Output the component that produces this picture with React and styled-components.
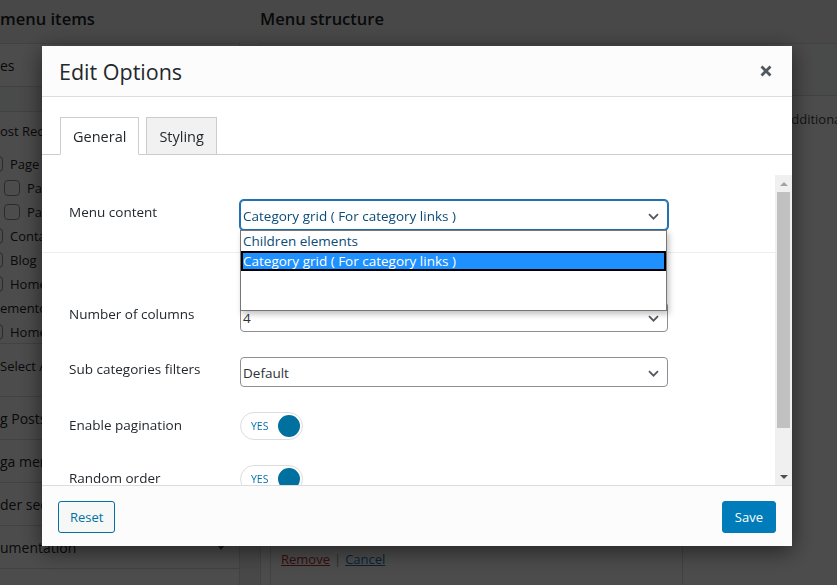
import React from "react";
import styled, { createGlobalStyle } from "styled-components";

const GlobalStyle = createGlobalStyle`
  html, body { margin: 0; padding: 0; overflow: hidden; }
  body {
    font-family: "Open Sans", "Liberation Sans", sans-serif;
    background: #f0f0f1;
    color: #1d2327;
  }
  * { box-sizing: border-box; }
`;

/* ---------- background admin page ---------- */

const Page = styled.div`
  width: 837px;
  height: 585px;
  overflow: hidden;
  display: flex;
  flex-direction: column;
`;

const Headings = styled.div`
  height: 43px;
  flex: none;
  display: flex;
  align-items: center;
  padding-bottom: 7px;
`;

const Heading = styled.h2`
  margin: 0;
  width: ${(p) => p.$width || "auto"};
  font-size: 16.5px;
  font-weight: 600;
  color: #1d2327;
  white-space: nowrap;
`;

const Columns = styled.div`
  flex: 1;
  min-height: 0;
  display: flex;
  gap: 20px;
`;

const SideColumn = styled.div`
  width: 240px;
  flex: none;
  background: #fff;
  border-top: 1px solid #dcdcde;
  border-right: 1px solid #dcdcde;
  font-size: 13px;
`;

const AccordionHead = styled.div`
  height: ${(p) => p.$h || 43}px;
  display: flex;
  align-items: center;
  justify-content: space-between;
  padding-right: 14px;
  border-bottom: 1px solid #dcdcde;
  font-size: 14px;
  white-space: nowrap;
`;

const Caret = styled.span`
  width: 0;
  height: 0;
  border-left: 4px solid transparent;
  border-right: 4px solid transparent;
  border-top: 5px solid #50575e;
`;

const TabStrip = styled.div`
  height: 25px;
  background: #f6f7f7;
  border-bottom: 1px solid #dcdcde;
`;

const TabLabel = styled.div`
  height: 28px;
  display: flex;
  align-items: flex-end;
  font-size: 13px;
`;

const CheckList = styled.div`
  padding-top: 12px;
  border-bottom: 1px solid #dcdcde;
  height: 204px;
  background: #fff;
`;

const CheckItem = styled.div`
  height: 24px;
  display: flex;
  align-items: center;
  gap: 7px;
  padding-left: ${(p) => (p.$indent ? 17 : 0)}px;
  margin-left: ${(p) => (p.$bare ? 0 : -13)}px;
  white-space: nowrap;
`;

const CheckBox = styled.span`
  width: 16px;
  height: 16px;
  flex: none;
  border: 1px solid #8c8f94;
  border-radius: 4px;
  background: #fff;
`;

const SelectAllRow = styled.div`
  height: 53px;
  padding-top: 12px;
  line-height: 20px;
  border-bottom: 1px solid #dcdcde;
  white-space: nowrap;
`;

const MainColumn = styled.div`
  flex: 1;
  display: flex;
  flex-direction: column;
  background: #fff;
  border-top: 1px solid #dcdcde;
  border-left: 1px solid #dcdcde;
`;

const MenuHeader = styled.div`
  height: 52px;
  flex: none;
  background: #f6f7f7;
  border-bottom: 1px solid #dcdcde;
`;

const Hint = styled.p`
  margin: 14px 0 0;
  padding-left: 523px;
  font-size: 13px;
  white-space: nowrap;
  color: #3c434a;
`;

const ItemBox = styled.div`
  margin: auto 0 -20px 9px;
  width: 413px;
  height: 200px;
  border: 1px solid #dcdcde;
  display: flex;
  align-items: flex-end;
  padding: 0 0 35px 10px;
  font-size: 13px;
  line-height: 20px;
`;

const ActionLink = styled.span`
  color: ${(p) => (p.$danger ? "#b32d2e" : "#2271b1")};
  text-decoration: underline;
`;

const Sep = styled.span`
  color: #8c8f94;
  padding: 0 4px;
`;

const Overlay = styled.div`
  position: fixed;
  inset: 0;
  background: rgba(0, 0, 0, 0.7);
`;

/* ---------- modal ---------- */

const Modal = styled.div`
  position: fixed;
  left: 42px;
  top: 46px;
  width: 750px;
  height: 500px;
  background: #fff;
  box-shadow: 0 5px 22px rgba(0, 0, 0, 0.55);
  display: flex;
  flex-direction: column;
`;

const ModalHeader = styled.div`
  height: 51px;
  flex: none;
  background: #fcfcfc;
  border-bottom: 1px solid #dddddd;
  display: flex;
  align-items: center;
  justify-content: space-between;
  padding: 0 20px 0 17px;
`;

const Title = styled.h1`
  margin: 0;
  font-size: 21.5px;
  font-weight: 400;
  color: #23282d;
`;

const CloseButton = styled.button`
  border: 0;
  padding: 0;
  background: none;
  width: 12px;
  height: 12px;
  display: flex;
  cursor: pointer;
`;

const TabBar = styled.div`
  flex: none;
  display: flex;
  gap: 7px;
  padding: 20px 0 0 18px;
  border-bottom: 1px solid #cccccc;
`;

const Tab = styled.div`
  height: 38px;
  margin-bottom: -1px;
  padding: 0 12px;
  display: flex;
  align-items: center;
  font-size: 14.5px;
  color: #23282d;
  border: 1px solid #cccccc;
  background: ${(p) => (p.$active ? "#fff" : "#f1f1f1")};
  border-bottom-color: ${(p) => (p.$active ? "#fff" : "#cccccc")};
`;

const Body = styled.div`
  flex: 1;
  min-height: 0;
  padding-top: 20px;
  display: flex;
`;

const ScrollArea = styled.div`
  flex: 1;
  overflow: hidden;
`;

const Scrollbar = styled.div`
  width: 17px;
  flex: none;
  background: #f0f0f0;
  display: flex;
  flex-direction: column;
`;

const ScrollButton = styled.div`
  height: 17px;
  flex: none;
  display: flex;
  align-items: center;
  justify-content: center;
`;

const Arrow = styled.span`
  width: 0;
  height: 0;
  border-left: 4px solid transparent;
  border-right: 4px solid transparent;
  ${(p) =>
    p.$up
      ? "border-bottom: 4px solid #a3a3a3;"
      : "border-top: 4px solid #505050;"}
`;

const Thumb = styled.div`
  height: 236px;
  flex: none;
  margin: 0 2px;
  background: #c1c1c1;
`;

const Track = styled.div`
  flex: 1;
`;

const Section = styled.div`
  display: flex;
  flex-direction: column;
  gap: 25px;
  padding: ${(p) => (p.$first ? "25px 0 22px" : "49px 0 0")};
  border-bottom: ${(p) => (p.$first ? "1px solid #eeeeee" : "0")};
`;

const Row = styled.div`
  display: flex;
  align-items: flex-start;
  padding-left: 27px;
`;

const Label = styled.div`
  width: 171px;
  flex: none;
  padding-top: ${(p) => (p.$toggle ? 3 : 2)}px;
  font-size: 13.5px;
  line-height: 20px;
  color: #23282d;
`;

const SelectWrap = styled.div`
  position: relative;
  width: 428px;
  z-index: ${(p) => (p.$open ? 5 : 1)};
`;

const SelectBox = styled.div`
  height: 30px;
  border: 1px solid ${(p) => (p.$focus ? "#2271b1" : "#8c8f94")};
  box-shadow: ${(p) => (p.$focus ? "0 0 0 1px #2271b1" : "none")};
  border-radius: 4px;
  background: #fff;
  display: flex;
  align-items: center;
  justify-content: space-between;
  padding: 2px 8px 0 2px;
  font-size: 13.5px;
  color: ${(p) => (p.$focus ? "#0a4b78" : "#2c3338")};
`;

const DropList = styled.div`
  position: absolute;
  top: 30px;
  left: 0;
  width: 427px;
  height: 81px;
  background: #fff;
  border: 1px solid #767676;
  box-shadow: 2px 3px 6px rgba(0, 0, 0, 0.25);
`;

const Option = styled.div`
  height: 20px;
  line-height: 20px;
  padding-left: 2px;
  font-size: 13.5px;
  color: ${(p) => (p.$selected ? "#fff" : "#0a4b78")};
  background: ${(p) => (p.$selected ? "#1e90ff" : "#fff")};
  box-shadow: ${(p) => (p.$selected ? "inset 0 0 0 2px #000" : "none")};
  white-space: nowrap;
`;

const Toggle = styled.div`
  width: 63px;
  height: 28px;
  border: 1px solid #dddddd;
  border-radius: 14px;
  background: #fff;
  display: flex;
  align-items: center;
  justify-content: space-between;
  padding: 0 2px 0 10px;
`;

const ToggleText = styled.span`
  font-size: 10.5px;
  color: #0073aa;
`;

const Knob = styled.span`
  width: 22px;
  height: 22px;
  border-radius: 50%;
  background: #00709e;
`;

const Footer = styled.div`
  height: 61px;
  flex: none;
  background: #fcfcfc;
  border-top: 1px solid #dddddd;
  display: flex;
  align-items: center;
  justify-content: space-between;
  padding: 2px 16px 0;
`;

const Button = styled.button`
  height: 32px;
  padding: 0 ${(p) => (p.$primary ? 12 : 11)}px;
  border-radius: 3px;
  font-family: inherit;
  font-size: 13px;
  border: 1px solid ${(p) => (p.$primary ? "#007cba" : "#0071a1")};
  background: ${(p) => (p.$primary ? "#007cba" : "#f6f7f7")};
  color: ${(p) => (p.$primary ? "#fff" : "#0071a1")};
  cursor: pointer;
`;

function Chevron() {
  return (
    <svg width="11" height="7" viewBox="0 0 11 7">
      <path d="M1 1.2l4.5 4.5 4.5-4.5" fill="none" stroke="#50575e" strokeWidth="1.7" />
    </svg>
  );
}

function CloseIcon() {
  return (
    <svg width="12" height="12" viewBox="0 0 12 12">
      <path d="M1.5 1.5l9 9M10.5 1.5l-9 9" stroke="#50575e" strokeWidth="2.8" strokeLinecap="butt" />
    </svg>
  );
}

function Select({ value, focus, open, options }) {
  return (
    <SelectWrap $open={open}>
      <SelectBox $focus={focus}>
        <span>{value}</span>
        <Chevron />
      </SelectBox>
      {open && (
        <DropList>
          {options.map((o) => (
            <Option key={o} $selected={o === value}>
              {o}
            </Option>
          ))}
        </DropList>
      )}
    </SelectWrap>
  );
}

function YesToggle() {
  return (
    <Toggle>
      <ToggleText>YES</ToggleText>
      <Knob />
    </Toggle>
  );
}

const pageItems = [
  { t: "Page" },
  { t: "Parent page", indent: true },
  { t: "Past events", indent: true },
  { t: "Contact" },
  { t: "Blog" },
  { t: "Home" },
  { t: "ementor #1428", bare: true },
  { t: "Home" },
];

const lowerSections = ["g Posts", "ga menu", "der sections", "umentation"];

export default function App() {
  const grid = "Category grid ( For category links )";
  return (
    <>
      <GlobalStyle />
      <Page>
        <Headings>
          <Heading $width="260px">menu items</Heading>
          <Heading>Menu structure</Heading>
        </Headings>
        <Columns>
          <SideColumn>
            <AccordionHead>es</AccordionHead>
            <TabStrip />
            <TabLabel>ost Recent</TabLabel>
            <CheckList>
              {pageItems.map((it, i) => (
                <CheckItem key={i} $indent={it.indent} $bare={it.bare}>
                  {!it.bare && <CheckBox />}
                  {it.t}
                </CheckItem>
              ))}
            </CheckList>
            <SelectAllRow>Select All</SelectAllRow>
            {lowerSections.map((s, i) => (
              <AccordionHead key={s}>
                {s}
                {i === lowerSections.length - 1 && <Caret />}
              </AccordionHead>
            ))}
          </SideColumn>
          <MainColumn>
            <MenuHeader />
            <Hint>additional configuration options.</Hint>
            <ItemBox>
              <ActionLink $danger>Remove</ActionLink>
              <Sep>|</Sep>
              <ActionLink>Cancel</ActionLink>
            </ItemBox>
          </MainColumn>
        </Columns>
      </Page>
      <Overlay />
      <Modal>
        <ModalHeader>
          <Title>Edit Options</Title>
          <CloseButton aria-label="Close">
            <CloseIcon />
          </CloseButton>
        </ModalHeader>
        <TabBar>
          <Tab $active>General</Tab>
          <Tab>Styling</Tab>
        </TabBar>
        <Body>
          <ScrollArea>
            <Section $first>
              <Row>
                <Label>Menu content</Label>
                <Select value={grid} focus open options={["Children elements", grid]} />
              </Row>
            </Section>
            <Section>
              <Row>
                <Label>Number of columns</Label>
                <Select value="4" />
              </Row>
              <Row>
                <Label>Sub categories filters</Label>
                <Select value="Default" />
              </Row>
              <Row>
                <Label $toggle>Enable pagination</Label>
                <YesToggle />
              </Row>
              <Row>
                <Label $toggle>Random order</Label>
                <YesToggle />
              </Row>
            </Section>
          </ScrollArea>
          <Scrollbar>
            <ScrollButton>
              <Arrow $up />
            </ScrollButton>
            <Thumb />
            <Track />
            <ScrollButton>
              <Arrow />
            </ScrollButton>
          </Scrollbar>
        </Body>
        <Footer>
          <Button>Reset</Button>
          <Button $primary>Save</Button>
        </Footer>
      </Modal>
    </>
  );
}
